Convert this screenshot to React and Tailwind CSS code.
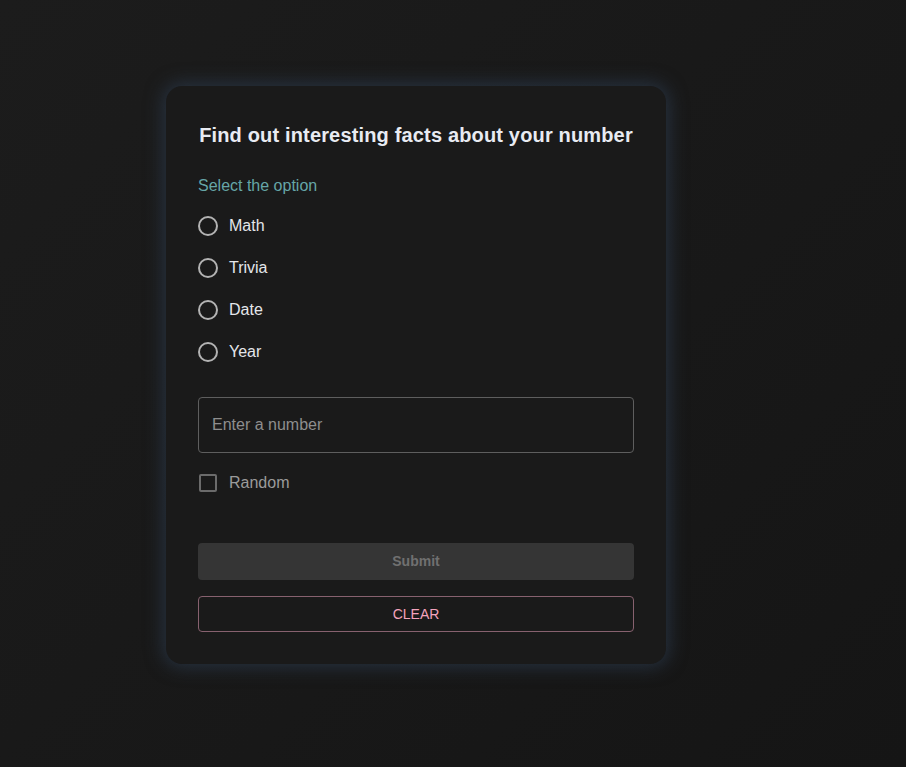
import { useState } from 'react';

const OPTIONS = ['Math', 'Trivia', 'Date', 'Year'];

function Radio({ label, checked, onChange }) {
  return (
    <label className="flex h-[42px] items-center cursor-pointer">
      <span className="flex w-5 h-5 items-center justify-center rounded-full border-2 border-[#b3b3b3]">
        {checked && <span className="w-2.5 h-2.5 rounded-full bg-[#66a6a6]" />}
      </span>
      <input type="radio" className="hidden" checked={checked} onChange={onChange} />
      <span className="ml-[11px] text-[16px] text-[#e4e6ea]">{label}</span>
    </label>
  );
}

export default function App() {
  const [option, setOption] = useState(null);
  const [number, setNumber] = useState('');
  const [random, setRandom] = useState(false);

  const canSubmit = option && (number || random);

  return (
    <div
      className="min-h-[767px] w-full bg-[linear-gradient(135deg,#1c1c1c_0%,#181818_60%,#151515_100%)] pl-[166px] pt-[86px]"
      style={{ fontFamily: '"Liberation Sans", Arial, sans-serif' }}
    >
      <div className="w-[500px] h-[578px] rounded-[16px] bg-[#1a1a1a] px-8 pt-[35px] pb-8 shadow-[0_0_18px_3px_rgba(42,56,74,0.8)] flex flex-col">
        <h1 className="text-center text-[20px] leading-[28px] font-bold tracking-[0.16px] text-[#e8ebf2]">
          Find out interesting facts about your number
        </h1>

        <div className="mt-[25px] text-[16px] leading-6 text-[#66a6a7]">Select the option</div>

        <div className="mt-[7px] flex flex-col">
          {OPTIONS.map((o) => (
            <Radio key={o} label={o} checked={option === o} onChange={() => setOption(o)} />
          ))}
        </div>

        <input
          type="text"
          value={number}
          onChange={(e) => setNumber(e.target.value)}
          placeholder="Enter a number"
          disabled={random}
          className="mt-6 h-[56px] w-full rounded-[4px] border border-[#5e5e5e] bg-transparent px-[13px] text-[16px] text-[#e4e6ea] placeholder:text-[#8e8e8e] outline-none"
        />

        <label className="mt-[9px] flex h-[42px] items-center cursor-pointer">
          <span className="ml-px w-[18px] h-[18px] rounded-[2px] border-2 border-[#6b6b6b]">
            {random && <span className="block w-full h-full bg-[#66a6a6]" />}
          </span>
          <input type="checkbox" className="hidden" checked={random} onChange={() => setRandom(!random)} />
          <span className="ml-3 text-[16px] text-[#9b9b9b]">Random</span>
        </label>

        <button
          type="button"
          disabled={!canSubmit}
          className="mt-[39px] h-[37px] w-full rounded-[4px] bg-[#353535] text-[14px] font-bold text-[#707070]"
        >
          Submit
        </button>

        <button
          type="button"
          onClick={() => {
            setOption(null);
            setNumber('');
            setRandom(false);
          }}
          className="mt-4 h-9 w-full rounded-[4px] border border-[#87616f] text-[14px] uppercase text-[#f4a3bd]"
        >
          Clear
        </button>
      </div>
    </div>
  );
}
